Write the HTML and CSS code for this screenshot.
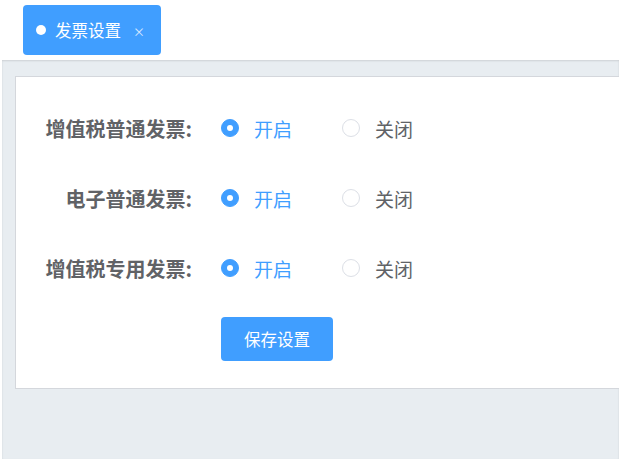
FILE: index.html
```html
<!DOCTYPE html>
<html lang="zh-CN">
<head>
    <meta charset="UTF-8">
    <meta name="viewport" content="width=device-width, initial-scale=1.0">
    <title>发票设置</title>
    <link rel="stylesheet" href="styles.css">
</head>
<body>
    <div class="tabs">
        <div class="tab active">
            <span class="tab-dot"></span>
            <span class="tab-title">发票设置</span>
            <span class="tab-close">×</span>
        </div>
    </div>

    <div class="main">
        <div class="panel">
            <div class="form-row">
                <div class="form-label">增值税普通发票:</div>
                <div class="radio-group">
                    <label class="radio checked"><span class="radio-input"></span><span class="radio-text">开启</span></label>
                    <label class="radio"><span class="radio-input"></span><span class="radio-text">关闭</span></label>
                </div>
            </div>

            <div class="form-row">
                <div class="form-label">电子普通发票:</div>
                <div class="radio-group">
                    <label class="radio checked"><span class="radio-input"></span><span class="radio-text">开启</span></label>
                    <label class="radio"><span class="radio-input"></span><span class="radio-text">关闭</span></label>
                </div>
            </div>

            <div class="form-row">
                <div class="form-label">增值税专用发票:</div>
                <div class="radio-group">
                    <label class="radio checked"><span class="radio-input"></span><span class="radio-text">开启</span></label>
                    <label class="radio"><span class="radio-input"></span><span class="radio-text">关闭</span></label>
                </div>
            </div>

            <div class="form-actions">
                <button class="btn-primary">保存设置</button>
            </div>
        </div>
    </div>
</body>
</html>
```

FILE: styles.css
```css
html, body {
    margin: 0;
    height: 100%;
    overflow: hidden;
}

body {
    font-family: "Noto Sans CJK SC", "Noto Sans", sans-serif;
    background: #fff;
    color: #606266;
}

.tabs {
    height: 60px;
    box-sizing: border-box;
    padding: 5px 0 0 23px;
}

.tab {
    display: inline-flex;
    align-items: center;
    height: 50px;
    box-sizing: border-box;
    padding: 0 16px 0 13px;
    border-radius: 4px;
    background: #409eff;
    color: #fff;
}

.tab-dot {
    width: 10px;
    height: 10px;
    border-radius: 50%;
    background: #fff;
    margin-right: 9px;
}

.tab-title {
    font-size: 16.5px;
}

.tab-close {
    font-size: 12px;
    margin-left: 12px;
    margin-top: 3px;
    opacity: 0.8;
}

.main {
    margin-left: 2px;
    height: 399px;
    box-sizing: border-box;
    padding: 16px 0 0 13px;
    background: #e8edf1;
    box-shadow: inset 0 1px 2px rgba(0, 0, 0, 0.12);
}

.panel {
    width: 640px;
    box-sizing: border-box;
    background: #fff;
    border: 1px solid #d4d7dc;
    padding: 31px 0 27px;
}

.form-row {
    display: flex;
    align-items: center;
    height: 40px;
    margin-bottom: 30px;
}

.form-label {
    width: 176px;
    text-align: right;
    font-size: 20px;
    font-weight: bold;
    color: #606266;
}

.radio-group {
    display: flex;
    align-items: center;
    margin-left: 29px;
}

.radio {
    display: inline-flex;
    align-items: center;
    margin-right: 50px;
    font-size: 19px;
    cursor: pointer;
}

.radio-input {
    width: 18px;
    height: 18px;
    box-sizing: border-box;
    border-radius: 50%;
    border: 1px solid #dcdfe6;
    background: #fff;
    margin-right: 15px;
    position: relative;
}

.radio.checked .radio-input {
    border-color: #409eff;
    background: #409eff;
}

.radio.checked .radio-input::after {
    content: "";
    position: absolute;
    left: 50%;
    top: 50%;
    width: 6px;
    height: 6px;
    margin: -3px 0 0 -3px;
    border-radius: 50%;
    background: #fff;
}

.radio.checked .radio-text {
    color: #409eff;
}

.form-actions {
    margin-top: -1px;
    padding-left: 205px;
}

.btn-primary {
    width: 112px;
    height: 44px;
    border: none;
    border-radius: 4px;
    background: #409eff;
    color: #fff;
    font-family: inherit;
    font-size: 16.5px;
    cursor: pointer;
}
```
